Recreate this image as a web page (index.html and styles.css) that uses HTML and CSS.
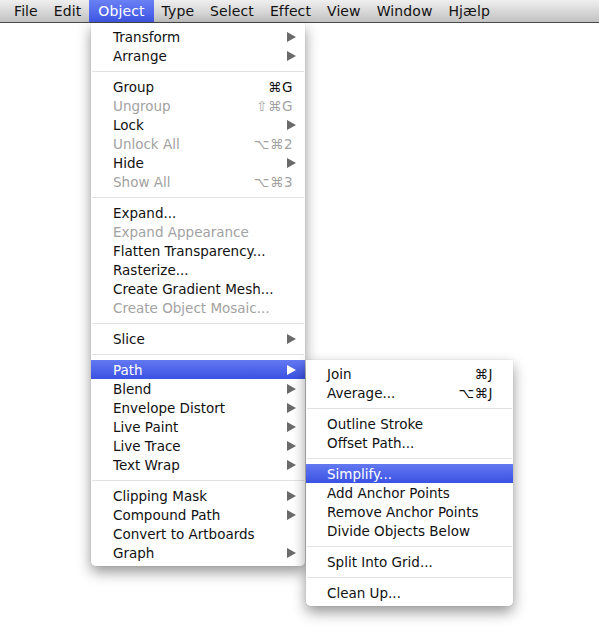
FILE: index.html
```html
<!DOCTYPE html>
<html>
<head>
<meta charset="utf-8">
<link rel="stylesheet" href="styles.css">
</head>
<body>
<div class="menubar">
  <span class="mb-item first">File</span>
  <span class="mb-item">Edit</span>
  <span class="mb-item active">Object</span>
  <span class="mb-item">Type</span>
  <span class="mb-item">Select</span>
  <span class="mb-item">Effect</span>
  <span class="mb-item">View</span>
  <span class="mb-item">Window</span>
  <span class="mb-item">Hjælp</span>
</div>

<div class="menu main">
  <div class="row"><span>Transform</span><i class="arrow"></i></div>
  <div class="row"><span>Arrange</span><i class="arrow"></i></div>
  <div class="sep"></div>
  <div class="row"><span>Group</span><span class="key">⌘G</span></div>
  <div class="row off"><span>Ungroup</span><span class="key">⇧⌘G</span></div>
  <div class="row"><span>Lock</span><i class="arrow"></i></div>
  <div class="row off"><span>Unlock All</span><span class="key">⌥⌘2</span></div>
  <div class="row"><span>Hide</span><i class="arrow"></i></div>
  <div class="row off"><span>Show All</span><span class="key">⌥⌘3</span></div>
  <div class="sep"></div>
  <div class="row"><span>Expand...</span></div>
  <div class="row off"><span>Expand Appearance</span></div>
  <div class="row"><span>Flatten Transparency...</span></div>
  <div class="row"><span>Rasterize...</span></div>
  <div class="row"><span>Create Gradient Mesh...</span></div>
  <div class="row off"><span>Create Object Mosaic...</span></div>
  <div class="sep"></div>
  <div class="row"><span>Slice</span><i class="arrow"></i></div>
  <div class="sep"></div>
  <div class="row hl"><span>Path</span><i class="arrow"></i></div>
  <div class="row"><span>Blend</span><i class="arrow"></i></div>
  <div class="row"><span>Envelope Distort</span><i class="arrow"></i></div>
  <div class="row"><span>Live Paint</span><i class="arrow"></i></div>
  <div class="row"><span>Live Trace</span><i class="arrow"></i></div>
  <div class="row"><span>Text Wrap</span><i class="arrow"></i></div>
  <div class="sep"></div>
  <div class="row"><span>Clipping Mask</span><i class="arrow"></i></div>
  <div class="row"><span>Compound Path</span><i class="arrow"></i></div>
  <div class="row"><span>Convert to Artboards</span></div>
  <div class="row"><span>Graph</span><i class="arrow"></i></div>
</div>

<div class="menu sub">
  <div class="row"><span>Join</span><span class="key">⌘J</span></div>
  <div class="row"><span>Average...</span><span class="key">⌥⌘J</span></div>
  <div class="sep"></div>
  <div class="row"><span>Outline Stroke</span></div>
  <div class="row"><span>Offset Path...</span></div>
  <div class="sep"></div>
  <div class="row hl"><span>Simplify...</span></div>
  <div class="row"><span>Add Anchor Points</span></div>
  <div class="row"><span>Remove Anchor Points</span></div>
  <div class="row"><span>Divide Objects Below</span></div>
  <div class="sep"></div>
  <div class="row"><span>Split Into Grid...</span></div>
  <div class="sep"></div>
  <div class="row"><span>Clean Up...</span></div>
</div>
</body>
</html>
```

FILE: styles.css
```css
html, body {
  margin: 0;
  padding: 0;
  background: #ffffff;
}

body {
  font-family: "DejaVu Sans", "Liberation Sans", sans-serif;
  font-size: 13.5px;
  color: #111;
  width: 599px;
  height: 642px;
  position: relative;
  overflow: hidden;
}

.menubar {
  height: 22px;
  display: flex;
  align-items: stretch;
  background: linear-gradient(#efefef, #d4d4d4 60%, #c2c2c2);
  border-bottom: 1px solid #4a4a4a;
  box-sizing: content-box;
}

.mb-item {
  display: flex;
  align-items: center;
  padding: 0 8px;
  font-size: 14px;
  letter-spacing: 0.1px;
  color: #111;
}

.mb-item.first {
  margin-left: 6px;
}

.mb-item.active {
  padding: 0 9px;
  background: linear-gradient(#6a80f4, #3f57e6);
  color: #fff;
}

.menu {
  position: absolute;
  background: rgba(255, 255, 255, 0.97);
  border-radius: 0 0 5px 5px;
  box-shadow: 0 6px 14px rgba(0, 0, 0, 0.42), 0 0 1px rgba(0, 0, 0, 0.25);
  padding: 4px 0;
}

.menu.main {
  left: 91px;
  top: 23px;
  width: 214px;
}

.menu.sub {
  left: 306px;
  top: 360px;
  width: 207px;
}

.row {
  height: 19px;
  display: flex;
  align-items: center;
  justify-content: space-between;
  padding: 0 12px 0 22px;
  white-space: nowrap;
}

.sub .row {
  padding: 0 20px 0 21px;
}

.row.off {
  color: #a2a2a2;
}

.row.hl {
  background: linear-gradient(#6379f2, #3a51e3);
  color: #fff;
}

.key {
  letter-spacing: 0.5px;
}

.arrow {
  width: 0;
  height: 0;
  border-top: 5px solid transparent;
  border-bottom: 5px solid transparent;
  border-left: 9px solid #6a6a6a;
  margin-right: -3px;
}

.row.hl .arrow {
  border-left-color: #ffffff;
}

.sep {
  height: 12px;
  display: flex;
  align-items: center;
}

.sep::before {
  content: "";
  flex: 1;
  height: 1px;
  margin: 0 1px;
  background: #e2e2e2;
}
```
